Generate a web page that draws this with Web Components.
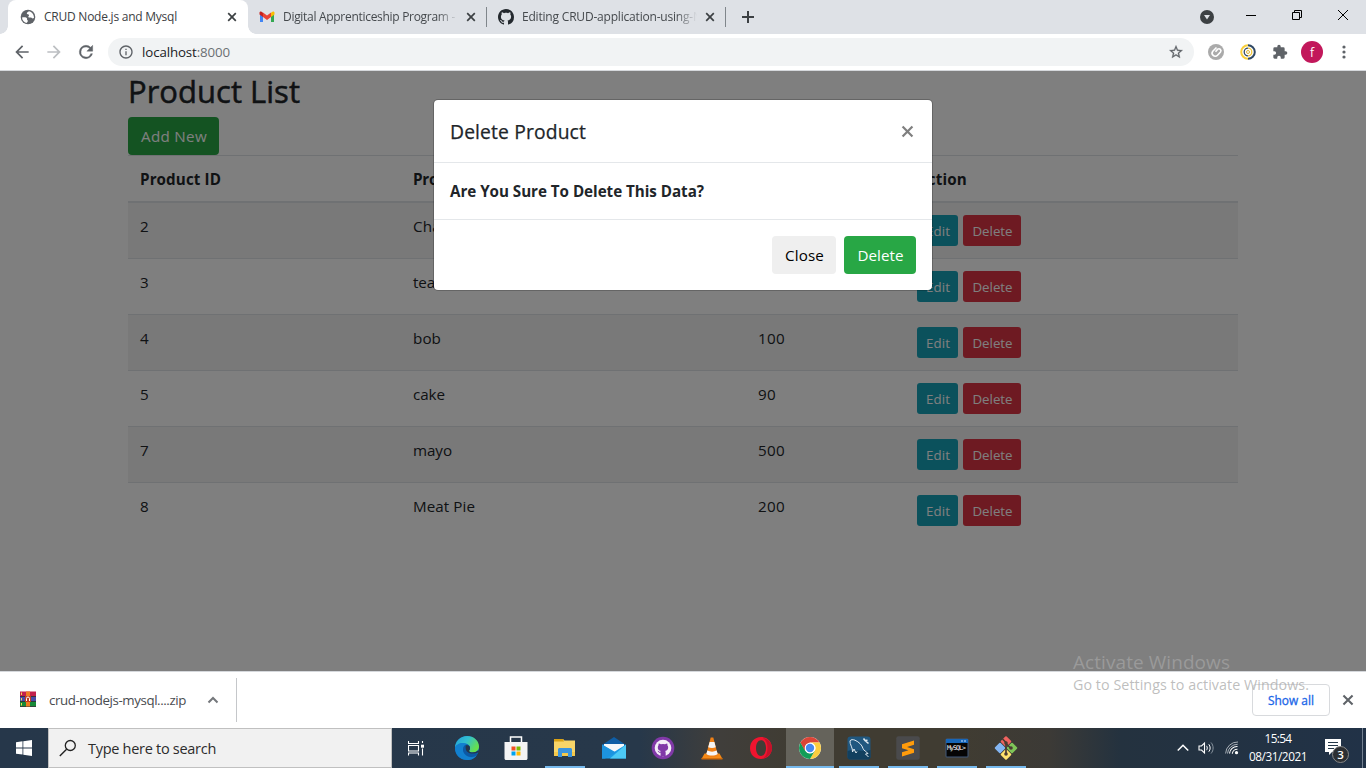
<!DOCTYPE html>
<html lang="en">
<head>
<meta charset="utf-8">
<title>CRUD Node.js and Mysql</title>
<style>
html,body{margin:0;height:100%;overflow:hidden}
body{font-family:"Open Sans","Noto Sans",sans-serif;background:#fff}
</style>
</head>
<body>
<desktop-screen></desktop-screen>
<script>
const ICONS = {
globe:[16,16,'<circle cx="8" cy="8" r="7.300" fill="#5f6368"/><path d="M2 8.500C3.500 8.300 6 7.800 6.800 9s-.3 1.500.7 2.200S7 13.800 6.500 13.900C4 13.400 2.200 11.300 2 8.500zM8.800 2.200c-1 1-2 1.200-2 2.300s2 .5 2.200 1.500-1.300 1.500-.5 2.300 2-.3 3 .5 1.300.8 2.500.2C14 5.500 12 2.700 8.800 2.200z" fill="#fff"/>'],
gmail:[16,12,'<path d="M1 1.500V11h3V5z" fill="#4285f4"/><path d="M15 1.500V11h-3V5z" fill="#34a853"/><path d="M12 1.800 13.500.7C14.500 0 15.500.7 15.500 1.800V3.500L12 6z" fill="#fbbc04"/><path d="M4 6V1.500L8 4.500l4-3V6L8 9z" fill="#ea4335"/><path d="M.5 1.800C.5.7 1.500 0 2.500.7L4 1.800V6L.5 3.500z" fill="#c5221f"/>'],
github:[16,16,'<path fill-rule="evenodd" fill="currentColor" d="M8 0C3.580 0 0 3.580 0 8c0 3.540 2.290 6.530 5.470 7.590.4.070.55-.17.55-.38 0-.19-.01-.82-.01-1.490-2.010.37-2.530-.49-2.690-.94-.09-.23-.48-.94-.82-1.130-.28-.15-.68-.52-.01-.53.63-.01 1.080.58 1.230.82.72 1.210 1.870.87 2.330.66.07-.52.28-.87.51-1.070-1.780-.2-3.640-.89-3.640-3.950 0-.87.31-1.590.82-2.150-.08-.2-.36-1.020.08-2.120 0 0 .67-.21 2.200.82.64-.18 1.320-.27 2-.27s1.360.09 2 .27c1.530-1.040 2.200-.82 2.200-.82.44 1.100.16 1.920.08 2.120.51.56.82 1.270.82 2.150 0 3.070-1.870 3.750-3.650 3.950.29.25.54.73.54 1.480 0 1.070-.01 1.930-.01 2.200 0 .21.15.46.55.38A8.010 8.010 0 0016 8c0-4.420-3.580-8-8-8z"/>'],
x:[10,10,'<path d="M1.200 1.200l7.600 7.600M8.800 1.200L1.200 8.800" stroke="currentColor" stroke-width="1.700" fill="none"/>'],
plus:[12,12,'<path d="M6 0v12M0 6h12" stroke="#3c4043" stroke-width="2"/>'],
drop:[14,14,'<circle cx="7" cy="7" r="7" fill="#3c4043"/><path d="M4 5h6L7 9.500z" fill="#dee1e6"/>'],
min:[10,10,'<path d="M0 5.500h10" stroke="#000"/>'],
restore:[10,10,'<path d="M.5 2.500h7v7h-7zM2.500 2.500v-2h7v7h-2" stroke="#000" fill="none"/>'],
close:[10,10,'<path d="M0 0l10 10M10 0L0 10" stroke="#000" stroke-width="1" fill="none"/>'],
back:[24,24,'<path d="M20 11H7.830l5.590-5.590L12 4l-8 8 8 8 1.410-1.410L7.830 13H20z" fill="currentColor"/>'],
fwd:[24,24,'<path d="M4 11h12.170l-5.590-5.590L12 4l8 8-8 8-1.410-1.410L16.170 13H4z" fill="currentColor"/>'],
reload:[24,24,'<path d="M17.650 6.350A7.960 7.960 0 0 0 12 4a8 8 0 1 0 7.730 10h-2.080A6 6 0 1 1 12 6c1.660 0 3.140.69 4.220 1.780L13 11h7V4z" fill="#5f6368" stroke="#5f6368" stroke-width=".5"/>'],
info:[24,24,'<path d="M11 7h2v2h-2zm0 4h2v6h-2zm1-9C6.480 2 2 6.480 2 12s4.480 10 10 10 10-4.480 10-10S17.520 2 12 2zm0 18a8 8 0 1 1 0-16 8 8 0 0 1 0 16z" fill="#5f6368"/>'],
star:[24,24,'<path d="M22 9.240l-7.190-.62L12 2 9.190 8.630 2 9.240l5.460 4.730L5.820 21 12 17.270 18.180 21l-1.630-7.030zM12 15.400l-3.760 2.270 1-4.280-3.320-2.880 4.380-.38L12 6.100l1.710 4.040 4.380.38-3.320 2.880 1 4.280z" fill="#5f6368" stroke="#5f6368" stroke-width=".4"/>'],
clip:[16,16,'<circle cx="8" cy="8" r="8" fill="#aaa"/><path d="M8.500 3.500 5 7a3 3 0 0 0 4.500 4.200L12.500 8a2 2 0 0 0-2.800-2.800L7.500 7.800" stroke="#fff" stroke-width="1.600" fill="none"/>'],
ring:[16,16,'<circle cx="8" cy="8" r="6.500" fill="#fff"/><path d="M8 1.200a6.800 6.800 0 0 0 0 13.600" stroke="#f9cf3a" stroke-width="2" fill="none"/><path d="M8 1.200a6.800 6.800 0 0 1 0 13.600" stroke="#2f4864" stroke-width="2" fill="none"/><path d="M8 4.200a3.800 3.800 0 0 0 0 7.600" fill="none" stroke="#2f4864" stroke-width="1.300"/><path d="M8 4.200a3.800 3.800 0 0 1 0 7.600" stroke="#f0c53a" stroke-width="1.300" fill="none"/><circle cx="8" cy="8" r="1.500" stroke="#d9b43c" fill="none"/>'],
puzzle:[24,24,'<path d="M20.500 11H19V7a2 2 0 0 0-2-2h-4V3.500a2.500 2.500 0 0 0-5 0V5H4a2 2 0 0 0-2 2v3.800h1.500a2.700 2.700 0 0 1 0 5.400H2V20c0 1.100.9 2 2 2h3.800v-1.500a2.700 2.700 0 0 1 5.400 0V22H17a2 2 0 0 0 2-2v-4h1.500a2.500 2.500 0 0 0 0-5z" fill="#5f6368"/>'],
dots:[4,14,'<circle cx="2" cy="2" r="1.600" fill="#5f6368"/><circle cx="2" cy="7" r="1.600" fill="#5f6368"/><circle cx="2" cy="12" r="1.600" fill="#5f6368"/>'],
rar:[16,16,'<path d="M0 .5h16v5H0z" fill="#c2204c"/><path d="M0 5.500h16v5H0z" fill="#4a4aa8"/><path d="M0 10.500h16v5H0z" fill="#188a38"/><path d="M0 5.500h16M0 10.500h16M0 15.500h16" stroke="#222" stroke-width=".8"/><path d="M1.500 1.500v2.500M1.500 7v2.500M1.500 12v2.500" stroke="#f5d64c"/><path d="M6 .5h4v15H6z" fill="#ef7d22"/><path d="M5 5h6v6H5z" fill="#c23b20"/><path d="M6.500 10V7.500a1.500 1.500 0 0 1 3 0V10" stroke="#fff" fill="none"/>'],
chev:[12,8,'<path d="M1.500 6.500 6 2l4.500 4.500" fill="none" stroke="currentColor" stroke-width="var(--sw,2)"/>'],
win:[16,16,'<path d="M0 2.200 6.500 1.300V7.500H0zM7.300 1.200 16 0v7.500H7.300zM0 8.400h6.500v6.200L0 13.700zM7.300 8.400H16V16L7.300 14.700z" fill="#fff"/>'],
search:[18,18,'<circle cx="11.300" cy="6.500" r="5" fill="none" stroke="#222" stroke-width="1.300"/><path d="M7.600 10.200.8 17" stroke="#222" stroke-width="1.400"/>'],
task:[16,16,'<path d="M.5 1v2.500h10V1M.5 15.500V13h10v2.500M.5 5.500h10v5.500H.5zM14.500 1v2M14.500 8.500v7" fill="none" stroke="#fff" stroke-width="1.100"/><path d="M13 4.700h3v3h-3z" fill="#fff"/>'],
edge:[24,24,'<defs><linearGradient id="a" x1="0" y1="0" x2="1" y2=".5"><stop offset="0" stop-color="#249fd8"/><stop offset=".5" stop-color="#32bfd0"/><stop offset="1" stop-color="#66e14c"/></linearGradient></defs><circle cx="12" cy="12" r="12" fill="#126fbd"/><path d="M0 12C0 5 5.500 0 12 0c7 0 12 5 12 10.500 0 4-3.500 6-6.500 6-2 0-3.500-.8-3.500-1.500s1-1 1-3c0-2.500-2.500-4.500-6-4.500C4.500 7.500 1 9 0 12z" fill="url(#a)"/><path d="M0 12c.5-3 4-5 7.500-5 2 0 3.500.5 5 1.500-2.500 0-4.500 2-4.500 5 0 5 5 8.500 10 7.500 2-.4 3.500-1.500 4-2-1.500 3-6 5.500-10.500 5C4 23.500 0 18 0 12z" fill="#1280cf"/><path d="M8 13.500c0-3 2-4.900 4.500-4.900C14.500 9.500 15.300 11 15 12.500c-.3 1.600-1 1.800-1 2.500 0 1 2 1.800 4 1.500 2.500-.3 4-1 4.800-1.200.5.300.5 1.500-.8 3.500-1.500 1.600-4 2.400-6 2.200-4.500-.5-8-3.500-8-7.500z" fill="#0c59a4"/><path d="M11 9.500c2-.9 4 .6 4 2.700 0 1.600-1 2-1 2.800 0 .8 1.600 1.500 3.500 1.500 2 0 4.500-1 5.500-2 1-.3 1.300.5.500 1.500C18 19 11.500 17.500 10.800 13c-.2-1.400-.3-2.500.2-3.500z" fill="#25364a"/>'],
store:[24,24,'<path d="M6.500 7V1h11v6" fill="none" stroke="#fff" stroke-width="1.500"/><path d="M.5 6h23v16.500c0 .8-.7 1.500-1.500 1.500H2c-.8 0-1.500-.7-1.500-1.500z" fill="#f4f4f4"/><path d="M7.500 10.500h4v4h-4z" fill="#f25022"/><path d="M12.500 10.500h4v4h-4z" fill="#7fba00"/><path d="M7.500 15.500h4v4h-4z" fill="#00a4ef"/><path d="M12.500 15.500h4v4h-4z" fill="#ffb900"/>'],
folder:[24,24,'<path d="M1 3h9l1.500 1.500H22V20H1z" fill="#f8d568"/><path d="M1 3h9l1 2.500H1z" fill="#d9a114"/><path d="M1 16h21v4H1z" fill="#f4c84b"/><path d="M5 21v-7.500C5 12.700 5.700 12 6.500 12h11c.8 0 1.500.7 1.500 1.500V21h-4v-4H9v4z" fill="#3b94de"/>'],
mail:[24,24,'<path d="M0 9 12 1l12 8v4H0z" fill="#0f5ea6"/><path d="M2 8h20v8H2z" fill="#f5f8fa"/><path d="M0 8.500 12 16l12-7.500v14H0z" fill="#1d9be5"/><path d="M24 8.500v14H8z" fill="#4cc9f5"/><path d="M0 8.500v14h3L14 16.500z" fill="#1d93de"/>'],
ghapp:[24,24,'<circle cx="12" cy="12" r="11.300" fill="#8139a8"/><circle cx="12" cy="12" r="8.300" fill="#f4eef8"/><path transform="translate(4.300 4.700) scale(.96)" fill="#8139a8" d="M5.500 16V12.500c-1 .2-2-.1-2.600-1.200-.3-.5-.7-.6-.4-.8 1-.2 1.500 1.200 2.200 1.200.7 0 .6-.7 1-1C3.500 10.300 2.500 9 2.600 6.800c0-.9.4-1.500.8-2-.1-.7-.1-1.400.2-2 .9 0 1.600.4 2.200.9a8 8 0 0 1 4.400 0c.6-.5 1.300-.9 2.200-.9.3.6.300 1.300.2 2 .5.600.8 1.200.8 2 0 2.200-1 3.500-3.100 3.900.5.500.5 1 .5 1.800V16z"/>'],
vlc:[24,24,'<path d="M4.500 17.500h15l3 5.500h-21z" fill="#f58a16"/><path d="M1.500 22h21v1.500h-21z" fill="#d36b08"/><path d="M10.700 1.500h2.600l4.700 18c-3 2-9 2-12 0z" fill="#f18116"/><path d="M9.600 6h4.800l1.400 5.200c-2.500 1-5 1-7.600 0z" fill="#f5f5f5"/><path d="M7.300 14.500c3 1.500 6.500 1.500 9.400 0l1 3.500c-3 2-8.500 2-11.400 0z" fill="#f5f5f5"/>'],
opera:[24,24,'<path fill-rule="evenodd" d="M12 1C5.500 1 1 6 1 12.200S5.500 23 12 23s11-5 11-11S18.500 1 12 1zm0 3.200c3 0 5 3.300 5 7.800s-2 8-5 8-5-3.500-5-8 2-7.800 5-7.800z" fill="#f0142f"/><path d="M14 2c6 1 9 6 9 10s-3 9-9 10.500c3-2 4.500-5.500 4.500-10.500S17 4 14 2z" fill="#c4122a"/>'],
chrome:[24,24,'<circle cx="12" cy="12" r="11" fill="#fff"/><path d="M2.500 6.500A11 11 0 0 1 21.500 6.500H12a5.500 5.500 0 0 0-4.800 2.800L7.200 14.700z" fill="#db4437"/><path d="M21.500 6.500A11 11 0 0 1 12 23l4.800-8.200A5.500 5.500 0 0 0 12 6.500z" fill="#fbcd3f"/><path d="M12 23A11 11 0 0 1 2.500 6.500l4.700 8.200a5.500 5.500 0 0 0 9.600 0z" fill="#119d58"/><path d="M2.500 6.500 7.200 14.700 8 9.500 12 6.500H4z" fill="#db4437"/><circle cx="12" cy="12" r="5.300" fill="#fff"/><circle cx="12" cy="12" r="4.200" fill="#4688f1"/>'],
bench:[24,24,'<rect x=".5" y=".5" width="23" height="23" rx="3" fill="#20577f"/><path d="M.5 15C8 12 16 17 23.500 14v7c0 1.500-1 2.500-2.500 2.500H3c-1.500 0-2.500-1-2.500-2.500z" fill="#12405f"/><path d="M5.500 16C6 12 2.500 8 3 5c.4-1.800 3.500-1.500 5-.8C12 6 15 9 16 12.500c.5 2 3.500 3 5 5l-2.500.5 3 3M5.500 16l1.500-3 2 4 1-1.500" fill="none" stroke="#dfe9f0" stroke-width="1"/><path d="m16.500 2.500 1.500 2 2.500-.3M18 4.500l3.500 3" stroke="#dfe9f0" stroke-width="1.600" fill="none"/>'],
sublime:[24,24,'<rect x=".3" y=".3" width="23.400" height="23.400" rx="2" fill="#4a4a4c"/><path d="M18 4.500v4.200L11 11l7 2.200v3.600L6 20.500v-4.200l6.500-2L6 12.200V8.200z" fill="#ff9b0b"/>'],
term:[24,24,'<rect x=".5" y="2.500" width="23" height="19" rx="1.500" fill="#40597a"/><path d="M1 3h22v4H1z" fill="#1766b8"/><path d="M16 4h2v2h-2zM19 4h2v2h-2z" fill="#6ca2dc"/><path d="M1.500 7h21v13.500h-21z" fill="#050505"/><text x="2" y="14" font-family="DejaVu Sans Mono,monospace" font-size="6.500" fill="#fff" textLength="19">MySQL&gt;</text>'],
git:[24,24,'<rect x="8" y="1.500" width="8" height="8" rx="1" transform="rotate(45 12 5.500)" fill="#f0635f"/><rect x="2" y="8" width="8" height="8" rx="1" transform="rotate(45 6 12)" fill="#83b5f2"/><rect x="14" y="8" width="8" height="8" rx="1" transform="rotate(45 18 12)" fill="#7fc558"/><rect x="8" y="14.500" width="8" height="8" rx="1" transform="rotate(45 12 18.500)" fill="#ffe36e"/><path d="M8.500 3 12 6.500v11.500M12 7.500l4.500 4.500" stroke="#4a3b32" stroke-width="1.700" fill="none"/><circle cx="12" cy="7" r="1.800" fill="#4a3b32"/><circle cx="12" cy="18" r="1.800" fill="#4a3b32"/><circle cx="17" cy="12" r="1.800" fill="#4a3b32"/>'],
speaker:[18,14,'<path d="M1 5h2.500L6.500 2v10L3.500 9H1z" fill="none" stroke="#fff" stroke-width="1.100"/><path d="M8.500 4.800c1 1.300 1 3.100 0 4.400M10.800 3.300c1.800 2.200 1.800 5.200 0 7.400" fill="none" stroke="#fff"/><path d="M13 1.500c2.800 3 2.800 8 0 11" fill="none" stroke="#8a95a0"/>'],
wifi:[14,14,'<path d="M4.500 12.500a7.500 7.500 0 0 1 8-7M7.300 12.700a5 5 0 0 1 5.200-4.500" fill="none" stroke="#fff" stroke-width="1.100"/><path d="M.6 12.500A12 12 0 0 1 13 1M2.500 12.500A10 10 0 0 1 12.700 3.300" fill="none" stroke="#b5bcc3" stroke-width=".9"/><circle cx="11.500" cy="11.700" r="1.600" fill="#fff"/>'],
note:[24,24,'<path d="M0 0h16v13H7l-3 3v-3H0z" fill="#fff"/><path d="M3 3.500h10M3 6.500h10M3 9.500h6" stroke="#25384a"/><circle cx="15.500" cy="15.500" r="8" fill="#2c2f33" stroke="#888" stroke-width="1"/><text x="15.500" y="19.700" text-anchor="middle" font-family="Open Sans,sans-serif" font-size="11.500" font-weight="600" fill="#fff">3</text>']
};

const define = (name, css, html, after) => customElements.define(name, class extends HTMLElement {
  connectedCallback() {
    if (this.shadowRoot) return;
    const root = this.attachShadow({mode: 'open'});
    const markup = typeof html === 'function' ? html(this) : html;
    root.innerHTML = `<style>*{box-sizing:border-box}${css}</style>${markup}`;
    if (after) after(this, root);
  }
});

define('desktop-screen', `:host{display:grid;grid-template-rows:34px 37px 600px 57px 40px;height:768px;width:1366px;position:relative}`,
`<browser-tabs></browser-tabs><browser-toolbar></browser-toolbar><crud-page></crud-page><download-shelf></download-shelf><task-bar></task-bar><activation-note></activation-note>`);

define('browser-tabs', `:host{display:flex;background:#dee1e6;align-items:stretch;padding-left:8px}
.sep{width:1px;height:20px;background:#80868b;align-self:center;margin-top:0}
.new{width:44px;display:flex;align-items:center;justify-content:center}
.sys{margin-left:auto;display:flex;height:34px}
.sys ui-icon{width:46px}.sys .d{width:42px;height:34px}.sys .b{height:29px}`,
`<browser-tab active icon="globe" w="133">CRUD Node.js and Mysql</browser-tab>
<browser-tab icon="gmail" w="172">Digital Apprenticeship Program -</browser-tab><span class="sep"></span>
<browser-tab icon="github" w="171" faded="N">Editing CRUD-application-using-</browser-tab><span class="sep"></span>
<span class="new"><ui-icon name="plus" size="12"></ui-icon></span>
<span class="sys"><ui-icon class="d" name="drop" size="14"></ui-icon><ui-icon class="b" name="min" size="10"></ui-icon><ui-icon class="b" name="restore" size="10"></ui-icon><ui-icon class="b" name="close" size="10"></ui-icon></span>`);

define('browser-tab', `:host{display:flex;align-items:center;width:238px;padding-left:11px;font-size:12px;color:#45494d;position:relative}
:host([active]){width:240px;padding-left:12px;background:#fff;border-radius:8px 8px 0 0;color:#3c4043}
:host([active])::before,:host([active])::after{content:"";position:absolute;bottom:0;width:8px;height:8px}
:host([active])::before{left:-8px;background:radial-gradient(circle at 0 0,transparent 7.500px,#fff 8px)}
:host([active])::after{right:-8px;background:radial-gradient(circle at 100% 0,transparent 7.500px,#fff 8px)}
.t{margin-left:8px;width:175px;overflow:hidden;white-space:nowrap;line-height:20px}
:host(:not([active])) .t{-webkit-mask:linear-gradient(90deg,#000 88%,transparent);mask:linear-gradient(90deg,#000 88%,transparent)}
.x{margin-left:8px;color:#3c4043}`,
h=>`<ui-icon name="${h.getAttribute('icon')}" size="16" style="color:#24292e"></ui-icon><span class="t"><fit-text w="${h.getAttribute('w')}"><slot></slot></fit-text>${h.getAttribute('faded')||''}</span><ui-icon class="x" name="x" size="10"></ui-icon>`);

define('browser-toolbar', `:host{display:flex;align-items:center;background:#fff;border-bottom:1px solid #d5d8dc;padding-left:12px}
ui-icon{flex:none}.nav{margin-right:12px}
.url{display:flex;align-items:center;height:28px;width:1086px;border-radius:14px;background:#f1f3f4;padding:0 10px;font-size:13.300px;color:#6b6f73}
.url b{font-weight:400;color:#202124}.url fit-text{margin-left:8px}.star{margin-left:auto}
.ext{display:flex;align-items:center;gap:16px;padding-left:14px}
.av{width:22px;height:22px;border-radius:50%;background:#c2185b;color:#fff;font-size:12px;display:flex;align-items:center;justify-content:center;margin:0 -3px}
.dots{width:16px}`,
`<ui-icon class="nav" name="back" size="20" style="color:#5f6368"></ui-icon><ui-icon class="nav" name="fwd" size="20" style="color:#bcbfc2"></ui-icon><ui-icon class="nav" name="reload" size="20"></ui-icon>
<div class="url"><ui-icon name="info" size="16"></ui-icon><fit-text w="88"><b>localhost</b>:8000</fit-text><ui-icon class="star" name="star" size="16"></ui-icon></div>
<div class="ext"><ui-icon name="clip" size="16"></ui-icon><ui-icon name="ring" size="16"></ui-icon><ui-icon name="puzzle" size="16"></ui-icon><span class="av">f</span><ui-icon class="dots" name="dots" size="14"></ui-icon></div>`);

define('crud-page', `:host{display:block;position:relative;overflow:hidden;background:#fff;color:#212529;font-size:15.200px}
main{width:1110px;margin:0 auto 0 128px}
h2{margin:0 0 8px;font-size:31px;font-weight:500;line-height:38px;height:38px;padding:1px 0 0 0;-webkit-text-stroke:.5px}
h2 fit-text{display:inline-block}
.shade{position:absolute;inset:0;background:rgba(0,0,0,.5);display:flex;justify-content:center;align-items:flex-start;padding-top:28px}`,
`<main><h2><fit-text w="172">Product List</fit-text></h2><ui-button kind="green" w="91" tw="66">Add New</ui-button>
<product-table></product-table></main>
<div class="shade"><confirm-modal></confirm-modal></div>`);

define('ui-button', `:host{display:flex;align-items:center;justify-content:center;height:38px;border-radius:4px;color:#fff;font-size:15.200px;line-height:24px;padding-left:1px}
:host([small]){height:31px;border-radius:3px;font-size:13.300px}
:host([kind=green]){background:#28a745}:host([kind=teal]){background:#17a2b8}:host([kind=red]){background:#dc3545}:host([kind=plain]){background:#efefef;color:#000}`,
h=>{h.style.cssText='box-sizing:border-box;width:'+h.getAttribute('w')+'px';return `<fit-text w="${h.getAttribute('tw')}"><slot></slot></fit-text>`});

const rows=[['2','','Chapati','',''],['3','','tea','',''],['4','','bob','100','27',28],['5','','cake','90','18',32],['7','','mayo','500','27',39],['8','','Meat Pie','200','27',62]];
define('product-table', `:host{display:block}
.head{display:grid;grid-template-columns:273px 345px 159px 1fr;border-top:1px solid #dee2e6;border-bottom:2px solid #dee2e6;height:48px;font-weight:700;line-height:23px;padding:12px 0}
.head>*{margin-left:12px}`,
`<div class="head"><fit-text w="81">Product ID</fit-text><fit-text w="107">Product Name</fit-text><span></span><fit-text w="50">Action</fit-text></div>`+
rows.map((r,i)=>`<product-row ${i%2?'':'odd'} ${i?'':'first'} pid="${r[0]}" name="${r[2]}" nw="${r[5]||(i?22:56)}" price="${r[3]}" pw="${r[4]}"></product-row>`).join(''));

define('product-row', `:host{display:grid;grid-template-columns:273px 345px 159px 1fr;border-top:1px solid #dee2e6;height:56px;box-sizing:border-box;padding:12px 0;line-height:22px}
:host([first]){border-top:0;height:55px}:host([odd]){background:#f2f2f2}
.c{margin-left:12px}.a{display:flex;gap:5px;margin-left:12px}`,
h=>{const g=k=>h.getAttribute(k);return `<span class="c">${g('pid')}</span><fit-text class="c" w="${g('nw')}">${g('name')}</fit-text>${g('price')?`<fit-text class="c" w="${g('pw')}">${g('price')}</fit-text>`:'<span class="c"></span>'}<span class="a"><ui-button small kind="teal" w="41" tw="24">Edit</ui-button><ui-button small kind="red" w="58" tw="40">Delete</ui-button></span>`});

define('confirm-modal', `:host{display:block;width:500px;box-sizing:border-box;background:#fff;background-clip:padding-box;border:1px solid rgba(0,0,0,.2);border-radius:5px;color:#212529}
header{display:flex;justify-content:space-between;height:63px;padding:16px;border-bottom:1px solid #e4e7ea;font-size:19.300px;line-height:32px;font-weight:500;-webkit-text-stroke:.25px}
header ui-icon{width:16px;height:30px;color:#7f7f7f;margin-right:1px}
.body{padding:16px;height:57px;border-bottom:1px solid #e4e7ea;font-weight:700;font-size:15.200px;line-height:24px}
footer{display:flex;justify-content:flex-end;gap:8px;padding:16px}`,
`<header><fit-text w="136">Delete Product</fit-text><ui-icon name="x" size="13"></ui-icon></header><div class="body"><fit-text w="254">Are You Sure To Delete This Data?</fit-text></div><footer><ui-button kind="plain" w="64" tw="39">Close</ui-button><ui-button kind="green" w="72" tw="46">Delete</ui-button></footer>`);

define('download-shelf', `:host{display:flex;align-items:center;background:#fff;border-top:1px solid #d5d8dc;padding:0 12px 0 20px;font-size:13.300px;color:#494c50}
.file{display:flex;align-items:center;width:217px;height:44px;border-right:1px solid #c5c7ca}
.file ui-icon:first-child{margin-top:-3px}
.file fit-text{margin-left:13px}.file .c{margin-left:21px;color:#74777b}
.all{margin-left:auto;width:78px;height:32px;border:1px solid #d8dadd;border-radius:4px;color:#1a66e8;font-size:11.900px;line-height:14px;display:flex;align-items:center;justify-content:center;padding-bottom:1px;-webkit-text-stroke:.3px}
.x{margin-left:12px;color:#5f6368}`,
`<div class="file"><ui-icon name="rar" size="16"></ui-icon><fit-text w="137">crud-nodejs-mysql....zip</fit-text><ui-icon class="c" name="chev" size="12"></ui-icon></div><span class="all"><fit-text w="46">Show all</fit-text></span><ui-icon class="x" name="x" size="12"></ui-icon>`);

const apps=[['task',16],['edge',24],['store',24],['folder',24,1],['mail',24],['ghapp',24],['vlc',24],['opera',24],['chrome',24,2],['bench',24,1],['sublime',24,1],['term',24,1],['git',24,1]];
define('task-bar', `:host{display:flex;background:linear-gradient(90deg,#26374a 0,#27384a 640px,#403e3b 720px,#403c32 800px,#403c32 960px,#3c3a36 1050px,#24323f 1120px,#213247 1366px);color:#fff}
.start{width:48px}.search{display:flex;align-items:center;width:344px;height:40px;background:#f1f1f1;border:1px solid #c0c0c0;color:#2c2c2c;font-size:14.500px;padding-left:10px;gap:11px}
task-app:first-of-type{width:50px;padding:0 2px 0 0}
.tray{margin-left:auto;display:flex;align-items:center}.up{width:22px;--sw:1.300}.sp{width:25px}.wf{width:26px}
.clock{width:74px;display:flex;flex-direction:column;align-items:center;font-size:11.800px;line-height:18px;margin-left:-4px;margin-top:-2px}
.note{margin:5px 13px 0 10px}.edge{width:1px;height:40px;background:#738090;margin-right:3px}`,
`<ui-icon class="start" name="win" size="16"></ui-icon><div class="search"><ui-icon name="search" size="18"></ui-icon><fit-text w="128">Type here to search</fit-text></div>
${apps.map(a=>`<task-app state="${a[2]||0}"><ui-icon name="${a[0]}" size="${a[1]}"></ui-icon></task-app>`).join('')}
<div class="tray"><ui-icon class="up" name="chev" size="14"></ui-icon><ui-icon class="sp" name="speaker" size="18"></ui-icon><ui-icon class="wf" name="wifi" size="14"></ui-icon><div class="clock"><fit-text w="27">15:54</fit-text><fit-text w="58">08/31/2021</fit-text></div><ui-icon class="note" name="note" size="24"></ui-icon><span class="edge"></span></div>`);

define('task-app', `:host{display:flex;flex:none;align-items:center;justify-content:center;box-sizing:border-box;width:49px;height:40px;padding-left:1px;position:relative}
:host([state="2"]){background:linear-gradient(#65635b,#65635b) 1px 0/48px 100% no-repeat}
:host([state="1"])::after,:host([state="2"])::after{content:"";position:absolute;bottom:0;height:2px;background:#76b9ed;left:5px;width:40px}
:host([state="2"])::after{left:1px;width:48px}`,`<slot></slot>`);

define('activation-note', `:host{display:block;position:absolute;left:1073px;top:650px;color:rgba(165,165,165,.72);pointer-events:none}
.a{font-size:19px;line-height:25px}.b{font-size:14.300px;line-height:20px}`,
`<div class="a"><fit-text w="157">Activate Windows</fit-text></div><div class="b"><fit-text w="236">Go to Settings to activate Windows.</fit-text></div>`);

define('ui-icon', `:host{display:inline-flex;align-items:center;justify-content:center}svg{display:block;flex:none}`,
h=>{const [w,ht,body]=ICONS[h.getAttribute('name')],s=+h.getAttribute('size'),k=s/Math.max(w,ht);
return `<svg width="${w*k}" height="${ht*k}" viewBox="0 0 ${w} ${ht}">${body}</svg>`});

/* Sets the letter spacing so that a label takes the width given in its w attribute. */
define('fit-text', `:host{display:inline-block;white-space:nowrap}span{display:inline-block;white-space:nowrap}`,
`<span><slot></slot></span>`, (h,root)=>{
  const s=root.querySelector('span'), w=+h.getAttribute('w');
  let t=h.textContent; const sl=h.querySelector('slot'); if(sl) t=sl.assignedNodes({flatten:true}).map(n=>n.textContent).join('');
  const n=t.trim().length; if(!w||!n) return;
  s.style.letterSpacing=((w-s.getBoundingClientRect().width)/n)+'px';
});
</script>
</body>
</html>
